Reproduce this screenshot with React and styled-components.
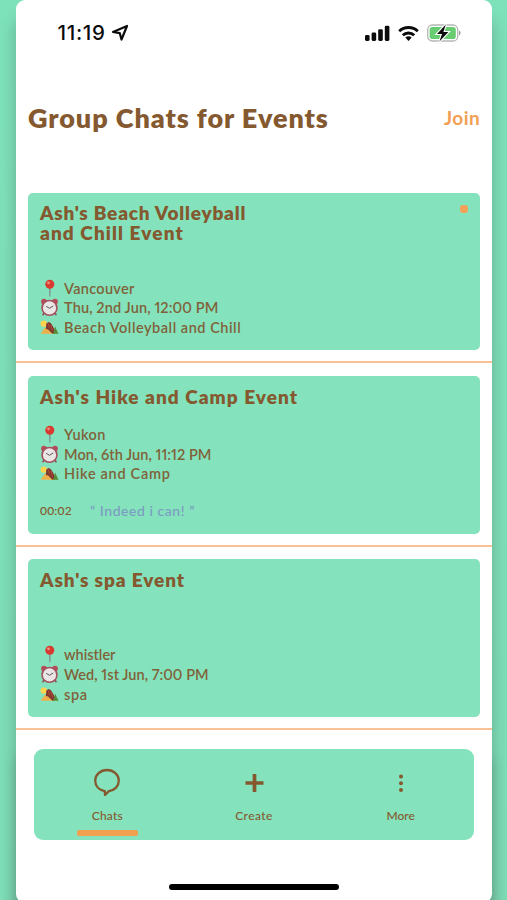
import React from "react";
import styled, { createGlobalStyle } from "styled-components";

const GlobalStyle = createGlobalStyle`
  * {
    box-sizing: border-box;
  }
  body {
    margin: 0;
    background: #7fdfb9;
    font-family: Lato, "Open Sans", sans-serif;
    color: #85592f;
  }
  p, h1, h2 {
    margin: 0;
  }
`;

const Page = styled.div`
  height: 900px;
  padding: 0 15px 0 15.5px;
  overflow: hidden;
  background: linear-gradient(#7de1ba, #7edeb7);
`;

const Phone = styled.main`
  display: flex;
  flex-direction: column;
  height: 903px;
  background: #fff;
  border-radius: 9px;
  box-shadow: 0 20px 16px rgba(60, 80, 70, 0.36), 0 756px 14px rgba(60, 80, 70, 0.3);
`;

const StatusBar = styled.div`
  display: flex;
  align-items: center;
  height: 66px;
  padding: 0 31.5px 0 42px;
`;

const Time = styled.span`
  font: 500 20.5px/24px Inter, sans-serif;
  letter-spacing: 0.7px;
  color: #0b0b0b;
  flex: 1;
  display: flex;
  align-items: center;
  gap: 5px;
`;

const StatusIcons = styled.div`
  display: flex;
  align-items: center;
  gap: 8px;
`;

const Header = styled.header`
  display: flex;
  align-items: center;
  justify-content: space-between;
  height: 103px;
  padding: 0 12px 0 12.5px;
`;

const Heading = styled.h1`
  font-size: 27px;
  font-weight: 800;
  line-height: 32px;
  letter-spacing: 0.93px;
  white-space: nowrap;
`;

const JoinButton = styled.button`
  padding: 0;
  border: 0;
  background: none;
  font: 700 19px/24px Lato, sans-serif;
  letter-spacing: 0.4px;
  color: #f2a054;
`;

const List = styled.section`
  display: flex;
  flex-direction: column;
  padding-top: 11px;
`;

const Row = styled.div`
  height: 183.3px;
  padding: 12.8px 12px 11.5px 12.5px;
  border-bottom: 2px solid #f8c296;
`;

const Card = styled.article`
  position: relative;
  display: flex;
  flex-direction: column;
  height: 157.5px;
  padding: 10.5px 12px 13px;
  border-radius: 5px;
  background: #84e2bc;
`;

const CardTitle = styled.h2`
  font-size: 19px;
  font-weight: 800;
  line-height: 19.5px;
  white-space: nowrap;
`;

const TitleLine = styled.span`
  display: block;
  letter-spacing: ${(props) => props.$track || 0}px;
`;

const Details = styled.div`
  margin-top: auto;
`;

const Detail = styled.p`
  display: flex;
  align-items: center;
  gap: 5px;
  height: 19.6px;
  font-size: 14.5px;
  font-weight: 600;
  font-variant-numeric: proportional-nums;
  letter-spacing: ${(props) => props.$track || 0}px;
  white-space: nowrap;
  color: #80623a;

  svg {
    flex: none;
  }
`;

const Message = styled.div`
  display: flex;
  align-items: center;
  height: 20px;
  margin-top: 17px;
`;

const MessageTime = styled.span`
  width: 50px;
  font-size: 12px;
  font-weight: 500;
  letter-spacing: 0.2px;
`;

const Quote = styled.span`
  font-size: 14px;
  font-weight: 500;
  letter-spacing: 0.55px;
  color: #7c9bc2;
`;

const Unread = styled.span`
  position: absolute;
  top: 12px;
  right: 12px;
  width: 8px;
  height: 8px;
  border-radius: 3px;
  background: #f2a25a;
`;

const Nav = styled.nav`
  display: grid;
  grid-template-columns: repeat(3, 1fr);
  height: 91px;
  margin: 19px 18px 0 18.5px;
  border-radius: 9px;
  background: #84e2bc;
`;

const Tab = styled.div`
  display: flex;
  flex-direction: column;
  align-items: center;
  padding-top: 19px;
  font-size: 12px;
  font-weight: 500;
  line-height: 16px;
  letter-spacing: ${(props) => props.$track || 0}px;

  svg {
    margin-bottom: 12px;
  }

  &::after {
    content: "";
    width: 61px;
    height: 6.5px;
    margin-top: 6px;
    border-radius: 2px;
    background: ${(props) => (props.$active ? "#f0a04f" : "transparent")};
  }
`;

const HomeBar = styled.div`
  width: 170px;
  height: 6.5px;
  margin: 44px auto 0;
  border-radius: 4px;
  background: #000;
`;

const LocationIcon = () => (
  <svg width="18" height="18" viewBox="0 0 18 18" fill="none">
    <path d="M16 2 10.5 15.5 8.8 9.2 2 8Z" stroke="#0b0b0b" strokeWidth="2.2" strokeLinejoin="round" />
  </svg>
);

const SignalIcon = () => (
  <svg width="25" height="17" viewBox="0 0 25 17" fill="#0b0b0b">
    <rect x="0" y="10" width="4.6" height="6" rx="1.4" />
    <rect x="6.6" y="7.4" width="4.6" height="8.6" rx="1.4" />
    <rect x="13.2" y="4.2" width="4.6" height="11.8" rx="1.4" />
    <rect x="19.8" y="0.8" width="4.6" height="15.2" rx="1.4" />
  </svg>
);

const WifiIcon = () => (
  <svg width="21" height="17" viewBox="0 0 21 17" fill="none" stroke="#0b0b0b" strokeWidth="2.9">
    <path d="M1.2 6.2C6.4 1.3 14.6 1.3 19.8 6.2" />
    <path d="M4.8 10.2c3.2-3 8.2-3 11.4 0" />
    <path d="m7.3 12.6c1.8-1.7 4.6-1.7 6.4 0l-3.2 3.3z" fill="#0b0b0b" stroke="none" />
  </svg>
);

const BatteryIcon = () => (
  <svg width="34" height="18" viewBox="0 0 34 18">
    <rect x="0.7" y="1" width="30" height="16" rx="4.6" fill="#fff" stroke="#b4b8b4" strokeWidth="1.3" />
    <rect x="2.6" y="2.9" width="26.2" height="12.2" rx="2.8" fill="#68cc72" />
    <path d="M32 6.6c2 .7 2 4.1 0 4.8z" fill="#999" />
    <path d="M18.8.6 10 10h5l-2.6 7.6L21.4 8h-5z" fill="#0b0b0b" stroke="#fff" strokeWidth="2.2" paintOrder="stroke" />
  </svg>
);

const PinIcon = () => (
  <svg width="19" height="19" viewBox="0 0 19 19">
    <path d="M9.1 8h1.5l-.2 9.4h-1.1z" fill="#7d8e91" />
    <circle cx="9.8" cy="5.2" r="4.5" fill="#d93a30" />
    <circle cx="8.5" cy="3.8" r="1.4" fill="#f58f7f" />
  </svg>
);

const ClockIcon = () => (
  <svg width="19" height="19" viewBox="0 0 19 19">
    <path d="m4.2 15-1.6 2.2M14.8 15l1.6 2.2" stroke="#8b4f5b" strokeWidth="1.6" />
    <circle cx="4" cy="3.6" r="2.9" fill="#b54c59" />
    <circle cx="15" cy="3.6" r="2.9" fill="#b54c59" />
    <circle cx="9.5" cy="9.9" r="7.4" fill="#e9e6e5" stroke="#a4505d" strokeWidth="1.6" />
    <path d="M6.2 8.3 9.5 10.3 13.3 7.9" fill="none" stroke="#5e5658" strokeWidth="1" />
  </svg>
);

const CampIcon = () => (
  <svg width="19" height="19" viewBox="0 0 19 19">
    <circle cx="3.8" cy="5.6" r="3.2" fill="#ffd34d" />
    <path d="M.6 15.8 5 9.5l10 6.3z" fill="#eeb04b" />
    <path d="m6.3 5.5 2.2-1.6 2.2 1.2 2.3 3.4 3 6.2-3.5 1-4.4-4.2-2.2-.6z" fill="#80382e" />
    <path d="m8.2 5.5 1.4 5M11 6.8l1.4 6" stroke="#b54b38" />
    <path d="m15.2 8.5 1.5 3.8 1.9 3.5h-5.5z" fill="#578b37" />
  </svg>
);

const ChatIcon = () => (
  <svg width="28" height="28" viewBox="0 0 28 28" fill="none">
    <path
      d="M14 2C7.4 2 2.2 6.7 2.2 12.6c0 5.5 3.8 9.6 9.6 10.5l.2 3.9 3.9-3.9c5.900-.8 9.900-5 9.900-10.500C25.800 6.700 20.600 2 14 2Z"
      stroke="#85592f"
      strokeWidth="2.3"
      strokeLinejoin="round"
    />
  </svg>
);

const PlusIcon = () => (
  <svg width="28" height="28" viewBox="0 0 28 28" stroke="#85592f" strokeWidth="3.7">
    <path d="M14.5 6v18M5.5 15h18" />
  </svg>
);

const DotsIcon = () => (
  <svg width="28" height="28" viewBox="0 0 28 28" fill="#85592f">
    <circle cx="14" cy="8.5" r="2" />
    <circle cx="14" cy="15.3" r="2" />
    <circle cx="14" cy="22.1" r="2" />
  </svg>
);

const events = [
  {
    title: [["Ash's Beach Volleyball", 0.77], ["and Chill Event", 1.1]],
    place: ["Vancouver", 0.3],
    date: ["Thu, 2nd Jun, 12:00 PM", 0.12],
    activity: ["Beach Volleyball and Chill", 0.53],
    unread: true,
  },
  {
    title: [["Ash's Hike and Camp Event", 1.04]],
    place: ["Yukon", 0.4],
    date: ["Mon, 6th Jun, 11:12 PM", 0.05],
    activity: ["Hike and Camp", 0.7],
    message: { time: "00:02", text: "“ Indeed i can! ”" },
  },
  {
    title: [["Ash's spa Event", 0.9]],
    place: ["whistler", 0],
    date: ["Wed, 1st Jun, 7:00 PM", 0.05],
    activity: ["spa", 0.6],
  },
];

const EventCard = ({ event }) => (
  <Row>
    <Card>
      <CardTitle>
        {event.title.map(([line, track]) => (
          <TitleLine key={line} $track={track}>{line}</TitleLine>
        ))}
      </CardTitle>
      {event.unread && <Unread />}
      <Details>
        <Detail $track={event.place[1]}><PinIcon />{event.place[0]}</Detail>
        <Detail $track={event.date[1]}><ClockIcon />{event.date[0]}</Detail>
        <Detail $track={event.activity[1]}><CampIcon />{event.activity[0]}</Detail>
      </Details>
      {event.message && (
        <Message>
          <MessageTime>{event.message.time}</MessageTime>
          <Quote>{event.message.text}</Quote>
        </Message>
      )}
    </Card>
  </Row>
);

const App = () => {
  return (
    <Page>
      <GlobalStyle />
      <Phone>
        <StatusBar>
          <Time>11:19 <LocationIcon /></Time>
          <StatusIcons>
            <SignalIcon />
            <WifiIcon />
            <BatteryIcon />
          </StatusIcons>
        </StatusBar>
        <Header>
          <Heading>Group Chats for Events</Heading>
          <JoinButton>Join</JoinButton>
        </Header>
        <List>
          {events.map((event) => (
            <EventCard key={event.date[0]} event={event} />
          ))}
        </List>
        <Nav>
          <Tab $active $track={0.2}><ChatIcon />Chats</Tab>
          <Tab $track={0.4}><PlusIcon />Create</Tab>
          <Tab><DotsIcon />More</Tab>
        </Nav>
        <HomeBar />
      </Phone>
    </Page>
  );
};

export default App;
